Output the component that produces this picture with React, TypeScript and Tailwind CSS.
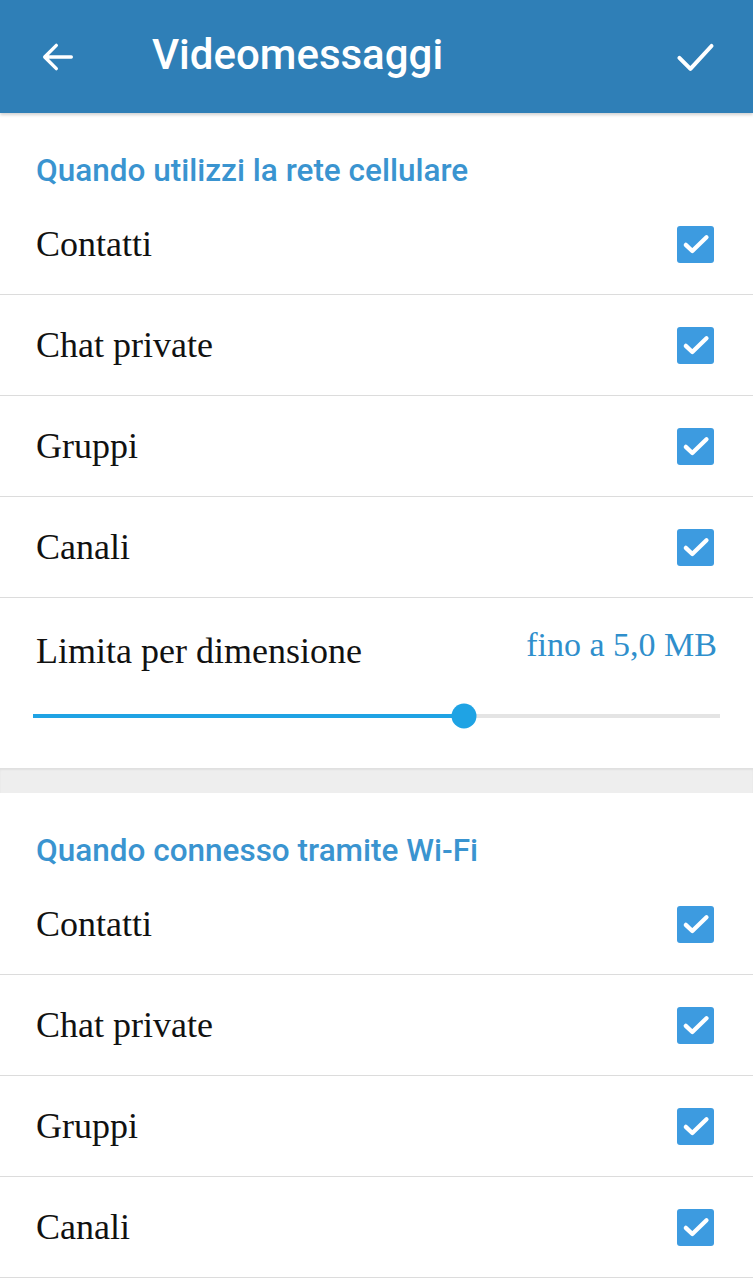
import React from 'react';

const serif = { fontFamily: '"Liberation Serif", "DejaVu Serif", serif' };
const sans = { fontFamily: 'Roboto, "Noto Sans", sans-serif' };

const CheckBox: React.FC = () => (
  <div className="w-[37px] h-[37px] rounded-[3px] bg-[#3d9be0] flex items-center justify-center">
    <svg width="34" height="34" viewBox="0 0 24 24" fill="none">
      <path d="M4.8 12.6l4.6 4.4L19.4 7.2" stroke="white" strokeWidth="3" strokeLinecap="round" strokeLinejoin="round" />
    </svg>
  </div>
);

const Row: React.FC<{ label: string; last?: boolean }> = ({ label, last }) => (
  <div className={`h-[101px] flex items-center justify-between pl-[36px] pr-[39px] ${last ? '' : 'border-b border-[#dcdcdc]'}`}>
    <span className="text-[36px] text-[#111111]" style={serif}>{label}</span>
    <CheckBox />
  </div>
);

const SectionHeader: React.FC<{ title: string }> = ({ title }) => (
  <div className="pt-[42px] pl-[36px] h-[81px]">
    <span className="text-[31.5px] font-medium text-[#3a94d0] leading-none" style={sans}>{title}</span>
  </div>
);

export default function App() {
  const items = ['Contatti', 'Chat private', 'Gruppi', 'Canali'];
  return (
    <div className="w-[753px] h-[1280px] bg-white overflow-hidden relative">
      <header className="h-[113px] bg-[#2f7fb7] flex items-center relative z-10 shadow-[0_2px_3px_rgba(0,0,0,0.18)]">
        <div className="w-[152px] pl-[38px] flex items-center">
          <svg width="40" height="40" viewBox="0 0 24 24" fill="none">
            <path d="M20 12H4.5M11 5l-7 7 7 7" stroke="white" strokeWidth="2" strokeLinecap="round" strokeLinejoin="round" />
          </svg>
        </div>
        <h1 className="flex-1 text-white text-[42px] font-medium leading-none -mt-[3px]" style={sans}>Videomessaggi</h1>
        <div className="pr-[36px]">
          <svg width="44" height="44" viewBox="0 0 24 24" fill="none">
            <path d="M3.5 12.5l6 6L21 6" stroke="white" strokeWidth="2.2" strokeLinecap="round" strokeLinejoin="round" />
          </svg>
        </div>
      </header>

      <section>
        <SectionHeader title="Quando utilizzi la rete cellulare" />
        <div>
          {items.map((i) => (
            <Row key={i} label={i} />
          ))}
        </div>
        <div className="h-[170px]">
          <div className="flex justify-between pl-[36px] pr-[36px] pt-[35px]">
            <span className="text-[36px] text-[#111111] leading-none" style={serif}>Limita per dimensione</span>
            <span className="text-[34px] text-[#2f8fcc] leading-none -mt-[5px]" style={serif}>fino a 5,0 MB</span>
          </div>
          <div className="mt-[45px] mx-[33px] h-[4px] bg-[#e4e4e4] relative">
            <div className="h-full bg-[#1fa3e4]" style={{ width: '62.7%' }} />
            <div className="absolute w-[25px] h-[25px] rounded-full bg-[#1fa3e4] top-1/2 -translate-y-1/2 -translate-x-1/2" style={{ left: '62.7%' }} />
          </div>
        </div>
      </section>

      <div className="h-[25px] bg-[#eeeeee] shadow-[inset_0_2px_2px_rgba(0,0,0,0.06)]" />

      <section>
        <SectionHeader title="Quando connesso tramite Wi-Fi" />
        <div>
          {items.map((i) => (
            <Row key={i} label={i} />
          ))}
        </div>
      </section>
    </div>
  );
}
